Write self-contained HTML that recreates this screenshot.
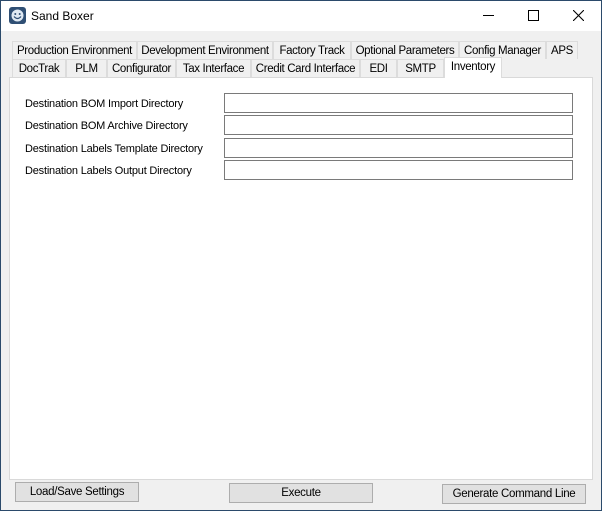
<!DOCTYPE html>
<html><head><style>
*{margin:0;padding:0;box-sizing:border-box}
body{width:602px;height:511px;overflow:hidden;background:#f0f0f0;font-family:"Liberation Sans",sans-serif;font-size:11px;color:#000;position:relative}
.frame{position:absolute;left:0;top:0;width:602px;height:511px;border:1px solid #2b4a6b}
.title{position:absolute;left:1px;top:1px;width:600px;height:30px;background:#fff}
.a{position:absolute;white-space:nowrap}
.tab{position:absolute;height:18px;background:#f0f0f0;border:1px solid #dcdcdc;border-bottom:none;text-align:center;line-height:18px;font-size:11.5px;letter-spacing:-0.35px}
.panel{position:absolute;left:9px;top:77px;width:584px;height:403px;background:#fff;border:1px solid #d9d9d9}
.inp{position:absolute;left:224px;width:349px;height:20px;background:#fff;border:1px solid #7a7a7a}
.lbl{position:absolute;left:25px;font-size:11px;letter-spacing:-0.2px}
.btn{position:absolute;height:20px;background:#e1e1e1;border:1px solid #adadad;text-align:center;line-height:19px;font-size:11.5px;letter-spacing:-0.3px}
</style></head><body>
<div class="title">
<svg class="a" style="left:8px;top:6px" width="17" height="17" viewBox="0 0 17 17"><rect width="17" height="17" rx="3" fill="#2f4f74"/><circle cx="8.5" cy="8.5" r="6" fill="#dfe9f3"/><circle cx="6.3" cy="7" r="1" fill="#2f4f74"/><circle cx="10.7" cy="7" r="1" fill="#2f4f74"/><path d="M5 9.5 Q8.5 13.5 12 9.5" stroke="#2f4f74" stroke-width="1.2" fill="none"/></svg>
<div class="a" style="left:30px;top:8px;font-size:12px">Sand Boxer</div>
<div class="a" style="left:482px;top:14px;width:11px;height:1px;background:#000"></div>
<div class="a" style="left:527px;top:9px;width:11px;height:11px;border:1px solid #000"></div>
<svg class="a" style="left:572px;top:9px" width="11" height="11"><path d="M0 0L11 11M11 0L0 11" stroke="#000" stroke-width="1.1"/></svg>
</div>
<div class="frame"></div>
<div class="tab" style="left:12px;top:41px;width:125px">Production Environment</div>
<div class="tab" style="left:137px;top:41px;width:136px">Development Environment</div>
<div class="tab" style="left:273px;top:41px;width:78px">Factory Track</div>
<div class="tab" style="left:351px;top:41px;width:108px">Optional Parameters</div>
<div class="tab" style="left:459px;top:41px;width:87px">Config Manager</div>
<div class="tab" style="left:546px;top:41px;width:32px">APS</div>
<div class="tab" style="left:12px;top:59px;width:54px">DocTrak</div>
<div class="tab" style="left:66px;top:59px;width:41px">PLM</div>
<div class="tab" style="left:107px;top:59px;width:69px">Configurator</div>
<div class="tab" style="left:176px;top:59px;width:75px">Tax Interface</div>
<div class="tab" style="left:251px;top:59px;width:109px">Credit Card Interface</div>
<div class="tab" style="left:360px;top:59px;width:37px">EDI</div>
<div class="tab" style="left:397px;top:59px;width:47px">SMTP</div>
<div class="panel"></div>
<div class="tab" style="left:444px;top:57px;width:58px;height:21px;background:#fff;line-height:18px;z-index:2">Inventory</div>
<div class="lbl" style="top:98px">Destination BOM Import Directory</div>
<div class="lbl" style="top:120px">Destination BOM Archive Directory</div>
<div class="lbl" style="top:143px">Destination Labels Template Directory</div>
<div class="lbl" style="top:165px">Destination Labels Output Directory</div>
<div class="inp" style="top:93px"></div>
<div class="inp" style="top:115px"></div>
<div class="inp" style="top:138px"></div>
<div class="inp" style="top:160px"></div>
<div class="btn" style="left:15px;top:482px;width:124px">Load/Save Settings</div>
<div class="btn" style="left:229px;top:483px;width:144px">Execute</div>
<div class="btn" style="left:442px;top:484px;width:144px">Generate Command Line</div>
</body></html>
